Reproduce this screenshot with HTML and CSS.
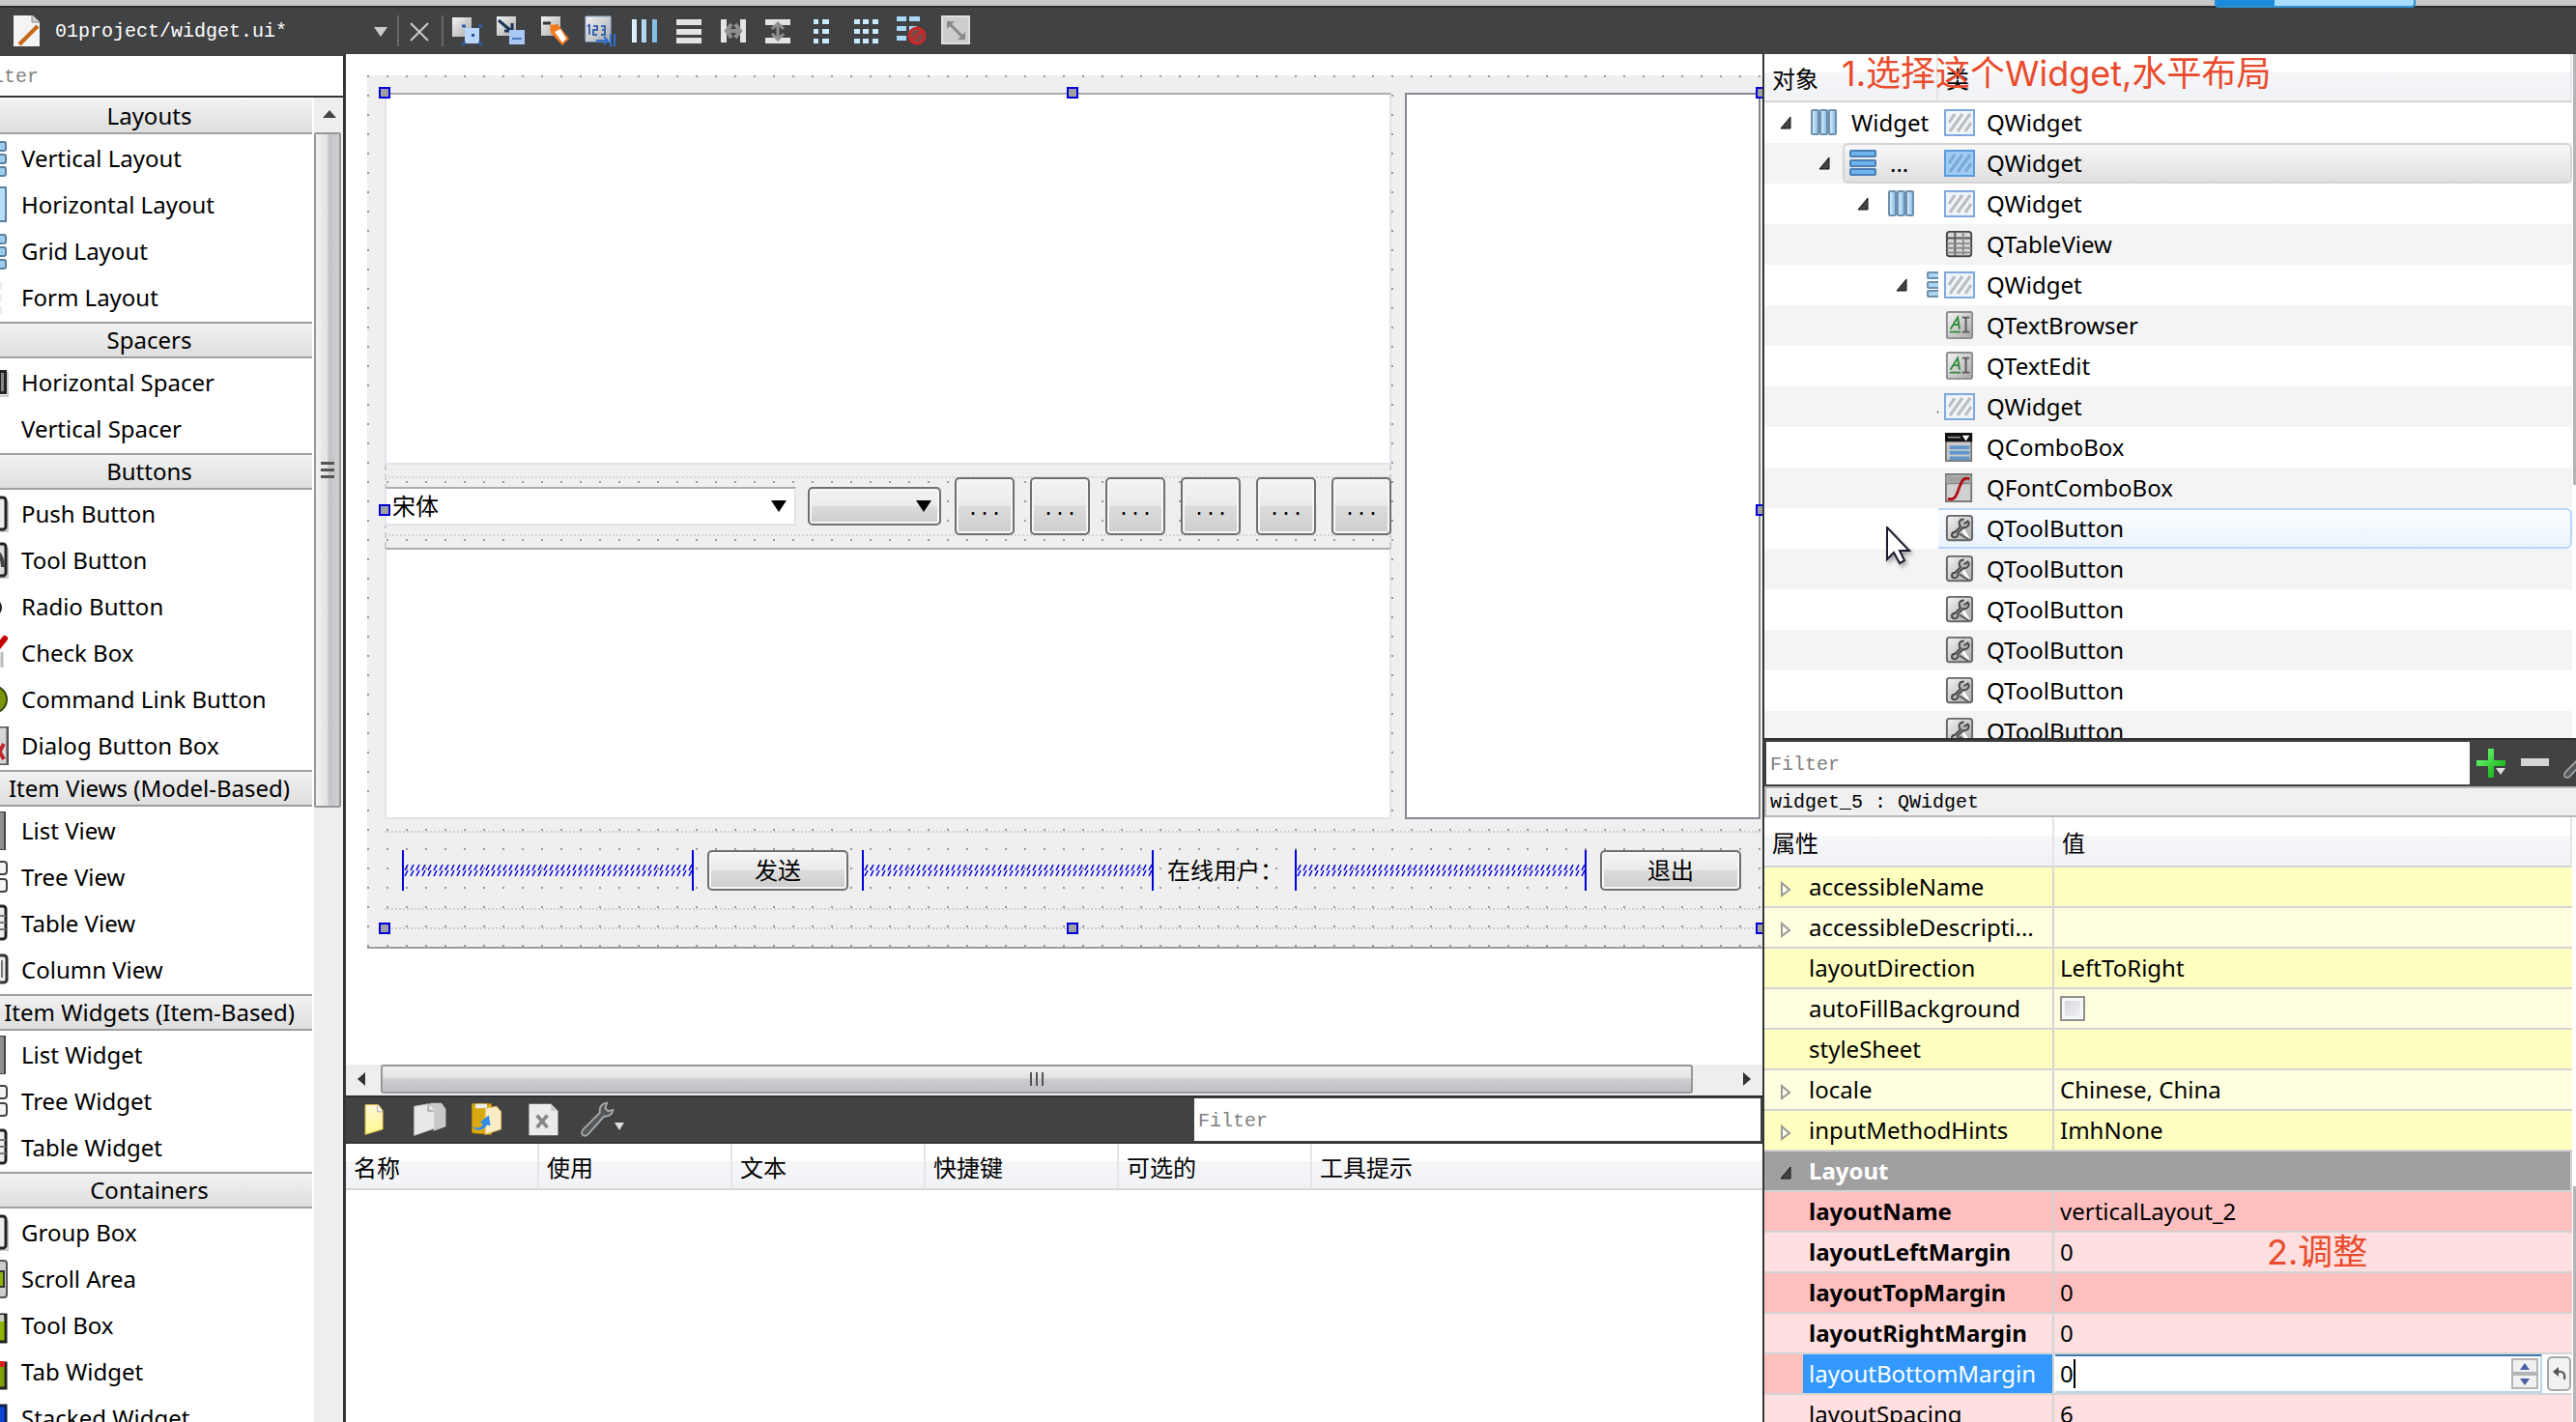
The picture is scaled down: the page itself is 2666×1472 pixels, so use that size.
FILE: index.html
```html
<!DOCTYPE html>
<html lang="zh-CN">
<head>
<meta charset="utf-8">
<title>01project/widget.ui* - Designer</title>
<link rel="stylesheet" href="styles.css">
</head>
<body>
<svg class="defs" aria-hidden="true">
  <defs>
    <linearGradient id="gBlue" x1="0" x2="1" y1="0" y2="0"><stop offset="0" stop-color="#e4f5ff"/><stop offset="1" stop-color="#7db8e2"/></linearGradient>
    <linearGradient id="gSteel" x1="0" x2="1" y1="0" y2="1"><stop offset="0" stop-color="#f4f4f4"/><stop offset="1" stop-color="#a8a8a8"/></linearGradient>
    <linearGradient id="gPage" x1="0" x2="0" y1="0" y2="1"><stop offset="0" stop-color="#fff6d8"/><stop offset="1" stop-color="#fff98c"/></linearGradient>
    <linearGradient id="gGreen" x1="0" x2="1" y1="0" y2="1"><stop offset="0" stop-color="#7dff7d"/><stop offset="1" stop-color="#00a800"/></linearGradient>
    <pattern id="hatch" width="6" height="12" patternUnits="userSpaceOnUse"><path d="M1 6 4 0M1 12 4 6" stroke="#0000dc" stroke-width="1.5"/></pattern>
    <symbol id="i-widget" viewBox="0 0 32 28"><rect x="1" y="1" width="30" height="26" fill="#eef4fb" stroke="#7fa9dc" stroke-width="2"/><path d="M5 14 11 5M6 23 19 5M14 23 27 5M22 23 28 14" stroke="#bcbcbc" stroke-width="3"/></symbol>
    <symbol id="i-widget-on" viewBox="0 0 32 28"><rect x="1" y="1" width="30" height="26" fill="#9fcaf3" stroke="#5b9be0" stroke-width="2"/><path d="M5 14 11 5M6 23 19 5M14 23 27 5M22 23 28 14" stroke="#7ba9d6" stroke-width="3"/></symbol>
    <symbol id="i-hbox" viewBox="0 0 28 28"><g fill="url(#gBlue)" stroke="#6f8fae" stroke-width="2"><rect x="1" y="1" width="7" height="25" rx="1"/><rect x="10" y="1" width="7" height="25" rx="1"/><rect x="19" y="1" width="7" height="25" rx="1"/></g></symbol>
    <symbol id="i-vbox" viewBox="0 0 28 28"><g fill="#6db4f0" stroke="#4a7fb4" stroke-width="2"><rect x="1" y="1" width="26" height="6" rx="1"/><rect x="1" y="11" width="26" height="6" rx="1"/><rect x="1" y="20" width="26" height="6" rx="1"/></g></symbol>
    <symbol id="i-form" viewBox="0 0 28 28"><g fill="#a9d4f2" stroke="#6f8fae" stroke-width="2"><rect x="1" y="1" width="26" height="6" rx="1"/><rect x="1" y="11" width="26" height="6" rx="1"/><rect x="1" y="20" width="26" height="6" rx="1"/></g></symbol>
    <symbol id="i-table" viewBox="0 0 32 32"><rect x="2" y="2" width="27" height="27" rx="3" fill="#d8d8d8" stroke="#444" stroke-width="2"/><path d="M2 9h27M11 2v27" stroke="#555" stroke-width="2"/><path d="M2 15h27M2 20h27M2 25h27M20 2v27" stroke="#8a8a8a" stroke-width="2"/></symbol>
    <symbol id="i-text" viewBox="0 0 32 32"><rect x="2" y="1" width="28" height="29" rx="2" fill="url(#gSteel)" stroke="#8d8d8d" stroke-width="2"/><path d="M6 20 14 7 16 20M9 15h6M5 23h12" stroke="#2f8a3c" stroke-width="2" fill="none"/><path d="M19 7h3l1 1 1-1h3M23 8v14M19 23h3l1-1 1 1h3" stroke="#555" stroke-width="2" fill="none"/></symbol>
    <symbol id="i-combo" viewBox="0 0 32 32"><rect x="1" y="1" width="28" height="30" fill="#c9c9c9" stroke="#777" stroke-width="2"/><path d="M0 0h30v10H0z" fill="#111"/><path d="M3 5h14" stroke="#888" stroke-width="2"/><path d="M19 3h8l-4 6z" fill="#fff"/><path d="M5 16h22M5 22h22M5 28h22" stroke="#5f97cc" stroke-width="4"/></symbol>
    <symbol id="i-font" viewBox="0 0 32 32"><rect x="1" y="1" width="28" height="30" fill="#d0d0d0" stroke="#777" stroke-width="2"/><path d="M1 4h28M1 11h28" stroke="#888" stroke-width="2"/><path d="M1 3h28v7H1z" fill="#a2a2a2"/><path d="M3 28c9 3 10-6 13-13S20 4 27 6" stroke="#b00d12" stroke-width="3" fill="none"/></symbol>
    <symbol id="i-tool" viewBox="0 0 32 32"><rect x="2" y="2" width="28" height="27" rx="3" fill="url(#gSteel)" stroke="#666" stroke-width="2"/><path d="M21 6c-5-1-7 4-4 8l-6 6c-4 0-5 5-1 6 4 0 5-3 4-5l6-6c5 1 8-4 5-7l-4 3" fill="#b5b5b5" stroke="#444" stroke-width="2"/><path d="M20 18l6 9" stroke="#fff" stroke-width="3"/><path d="M16 22l10 6" stroke="#555" stroke-width="2"/></symbol>
    <symbol id="i-open" viewBox="0 0 20 20"><path d="M15 4v12H5z" fill="#444" stroke="#111"/></symbol>
    <symbol id="i-closed" viewBox="0 0 20 20"><path d="M6 3v13l8-6z" fill="#fffff0" stroke="#999" stroke-width="2"/></symbol>
    <symbol id="i-wrench" viewBox="0 0 44 44"><path d="M3 39c-2-3 0-5 2-7L23 14c-1-6 2-10 8-11l-2 6 3 3 6-1c-1 5-5 8-10 7L10 38c-2 3-5 3-7 1z" fill="#55585a" stroke="#a9a9a9" stroke-width="2"/></symbol>

    <symbol id="l-v" viewBox="0 0 32 38"><g fill="#9fcdf0" stroke="#5c7fa3" stroke-width="2"><rect x="8" y="2" width="21" height="9" rx="2"/><rect x="8" y="15" width="21" height="9" rx="2"/><rect x="8" y="28" width="21" height="9" rx="2"/></g></symbol>
    <symbol id="l-h" viewBox="0 0 32 38"><g fill="#b4defa" stroke="#5c7fa3" stroke-width="2"><rect x="8" y="1" width="8" height="35"/><rect x="20" y="1" width="9" height="35"/></g></symbol>
    <symbol id="l-f" viewBox="0 0 32 38"><path d="M24 3v8M24 15v8M24 28v8" stroke="#eee" stroke-width="2"/></symbol>
    <symbol id="l-sp" viewBox="0 0 32 38"><path d="M18 6h12v25H18z" fill="#222"/><path d="M24 9h3v19h-3z" fill="#888"/><path d="M31 8v25H20" stroke="#ccc" stroke-width="2" fill="none"/></symbol>
    <symbol id="l-box" viewBox="0 0 32 38"><path d="M31 6v31H10" stroke="#c8c8c8" stroke-width="2" fill="none"/><rect x="4" y="2" width="25" height="33" rx="3" fill="#ececec" stroke="#222" stroke-width="3"/></symbol>
    <symbol id="l-tool" viewBox="0 0 32 38"><path d="M31 6v31H10" stroke="#c8c8c8" stroke-width="2" fill="none"/><rect x="4" y="2" width="25" height="33" rx="3" fill="#ddd" stroke="#222" stroke-width="3"/><path d="M22 12c2 4 4 6 4 14" stroke="#444" stroke-width="4" fill="none"/></symbol>
    <symbol id="l-radio" viewBox="0 0 32 38"><circle cx="15" cy="20" r="10" fill="#222"/></symbol>
    <symbol id="l-check" viewBox="0 0 32 38"><path d="M15 20 28 4" stroke="#c40000" stroke-width="6" stroke-linecap="round"/><path d="M25 18v16" stroke="#bbb" stroke-width="3"/></symbol>
    <symbol id="l-cmd" viewBox="0 0 32 38"><circle cx="16" cy="19" r="14" fill="#79960a" stroke="#33430b" stroke-width="2"/></symbol>
    <symbol id="l-dlg" viewBox="0 0 32 40"><path d="M2 0h29v40H2z" fill="#d7d7d7" stroke="#555" stroke-width="3"/><path d="M18 18l9 16M27 18l-9 16" stroke="#c0262b" stroke-width="4"/></symbol>
    <symbol id="l-list" viewBox="0 0 32 40"><path d="M2 0h26v40H2z" fill="#8c8f8c" stroke="#444" stroke-width="2"/></symbol>
    <symbol id="l-tree" viewBox="0 0 32 38"><g fill="#f4f4f4" stroke="#444" stroke-width="2"><rect x="14" y="3" width="16" height="13" rx="3"/><rect x="14" y="21" width="16" height="13" rx="3"/></g></symbol>
    <symbol id="l-tbl" viewBox="0 0 32 38"><rect x="4" y="1" width="25" height="34" rx="3" fill="#eee" stroke="#222" stroke-width="3"/><path d="M20 11h9M20 18h9M20 25h9" stroke="#777" stroke-width="2"/></symbol>
    <symbol id="l-col" viewBox="0 0 32 38"><rect x="4" y="4" width="26" height="28" rx="3" fill="#eee" stroke="#333" stroke-width="3"/><path d="M25 9v18" stroke="#777" stroke-width="2"/></symbol>
    <symbol id="l-scr" viewBox="0 0 32 40"><rect x="4" y="1" width="26" height="38" rx="3" fill="#ccc" stroke="#555" stroke-width="2"/><path d="M8 12h19v16H8z" fill="#8fb400" stroke="#333" stroke-width="2"/></symbol>
    <symbol id="l-tbox" viewBox="0 0 32 38"><path d="M4 8h25v28H4z" fill="#8fb400" stroke="#222" stroke-width="3"/><path d="M4 8h23v7H4z" fill="#ccc"/></symbol>
    <symbol id="l-tab" viewBox="0 0 32 38"><path d="M4 10h25v26H4z" fill="#7f9f08" stroke="#222" stroke-width="3"/><path d="M14 8h14v6H14z" fill="#d8201c"/></symbol>
    <symbol id="l-stk" viewBox="0 0 32 38"><path d="M4 6h25v28H4z" fill="#0b48d8" stroke="#10204a" stroke-width="3"/></symbol>
  </defs>
</svg>

<div class="app">
  <div class="desk"><span class="desk-tab"></span></div>
  <header class="topbar">
    <svg class="doc" viewBox="0 0 28 32"><path d="M0 0h20l7 7v25H0z" fill="#f4f4f4"/><path d="M19 0v7h8" fill="#ccc" stroke="#888"/><path d="M6 30 25 11" stroke="#c26a17" stroke-width="4"/></svg>
    <button class="doc-name" type="button">01project/widget.ui*<svg width="14" height="10" viewBox="0 0 14 10"><path d="M0 0h14L7 10z" fill="#ccc"/></svg></button>
    <i class="sep"></i>
    <button class="tb close" type="button" aria-label="Close"><svg viewBox="0 0 32 32"><path d="M7 8 25 26M25 8 7 26" stroke="#ccc" stroke-width="2"/></svg></button>
    <i class="sep"></i>
    <nav class="tools">
      <button class="tb" type="button" aria-label="Edit widgets"><svg viewBox="0 0 32 32"><path d="M1 2h20v20H1z" fill="url(#gSteel)"/><path d="M14 13h15v16H14z" fill="#b9d6ff"/><path d="M21 19h3v3h-3z" fill="#264f93"/><path d="M11 11h4M11 29h4M28 11h4M28 29h4" stroke="#2f5ea8" stroke-width="3"/></svg></button>
      <button class="tb" type="button" aria-label="Edit signals"><svg viewBox="0 0 32 32"><path d="M1 1h20v20H1z" fill="url(#gSteel)"/><path d="M3 5 16 16M9 16h8V8" stroke="#1d3557" stroke-width="3" fill="none"/><path d="M14 15h16v15H14z" fill="#a9c8f6"/><path d="M17 24h10" stroke="#4a7bc4" stroke-width="2"/></svg></button>
      <button class="tb" type="button" aria-label="Edit buddies"><svg viewBox="0 0 32 32"><path d="M1 1h20v20H1z" fill="url(#gSteel)"/><path d="M3 8h8" stroke="#333" stroke-width="3"/><path d="m10 10 8-1 12 15-7 7L11 18z" fill="#f47a20"/><path d="m15 17 6-3 6 10-4 4z" fill="#fff"/></svg></button>
      <button class="tb" type="button" aria-label="Edit tab order"><svg viewBox="0 0 32 32"><path d="M1 1h26v26H1z" fill="url(#gSteel)" stroke="#9db8de"/><path d="M3 11l2-1v10M9 11h4v4H9v5h4M17 11h4v9h-4M18 15h3" stroke="#3a67b0" stroke-width="2" fill="none"/><path d="M12 26h12M20 22l4 4-4 4M27 19v13M31 19v13" stroke="#2f6fd0" stroke-width="2" fill="none"/></svg></button>
      <button class="tb" type="button" aria-label="Lay out horizontally"><svg viewBox="0 0 32 32"><g fill="url(#gBlue)"><path d="M3 4h5v24H3zM13 4h5v24h-5zM24 4h5v24h-5z"/></g></svg></button>
      <button class="tb" type="button" aria-label="Lay out vertically"><svg viewBox="0 0 32 32"><path d="M3 4h26v6H3zM3 14h26v6H3zM3 23h26v6H3z" fill="#e4e4e4"/></svg></button>
      <button class="tb" type="button" aria-label="Horizontal splitter"><svg viewBox="0 0 32 32"><path d="M3 4h6v24H3zM23 4h6v24h-6z" fill="#e4e4e4"/><path d="M8 16h16M14 9l-5 7 5 7M18 9l5 7-5 7" stroke="#909090" stroke-width="4" fill="none"/></svg></button>
      <button class="tb" type="button" aria-label="Vertical splitter"><svg viewBox="0 0 32 32"><path d="M3 4h26v6H3zM3 23h26v6H3z" fill="#e4e4e4"/><path d="M16 8v16M10 14l6-6 6 6M10 19l6 6 6-6" stroke="#909090" stroke-width="3" fill="none"/></svg></button>
      <button class="tb" type="button" aria-label="Form layout"><svg viewBox="0 0 32 32"><g fill="#c9eaff"><path d="M7 4h5v5H7zM16 4h7v5h-7zM7 14h5v5H7zM16 14h7v5h-7zM7 24h5v5H7zM16 24h7v5h-7z"/></g></svg></button>
      <button class="tb" type="button" aria-label="Grid layout"><svg viewBox="0 0 32 32"><g fill="#c9eaff"><path d="M3 4h6v5H3zM12 4h6v5h-6zM22 4h6v5h-6zM3 14h6v5H3zM12 14h6v5h-6zM22 14h6v5h-6zM3 24h6v5H3zM12 24h6v5h-6zM22 24h6v5h-6z"/></g></svg></button>
      <button class="tb" type="button" aria-label="Break layout"><svg viewBox="0 0 32 32"><path d="M1 1h10v5H1zM14 1h11v5H14zM1 11h10v5H1zM14 11h8v5h-8zM1 21h10v5H1z" fill="#a9d9f5"/><circle cx="22" cy="21" r="8" fill="#7a4a4a" stroke="#c82a2a" stroke-width="3"/><path d="M16 27 28 15" stroke="#c82a2a" stroke-width="3"/></svg></button>
      <button class="tb" type="button" aria-label="Adjust size"><svg viewBox="0 0 32 32"><path d="M2 1h28v28H2z" fill="#cdcdcd" stroke="#e0e0e0" stroke-width="2"/><path d="M8 7 25 24" stroke="#888" stroke-width="3"/><path d="M7 6h8l-8 8zM26 25h-8l8-8z" fill="#888"/></svg></button>
    </nav>
  </header>

  <main class="work">
    <aside class="side">
      <input class="filter side-filter" type="text" placeholder="Filter" aria-label="Filter widgets">
      <div class="side-body">
        <div class="box">
          <h2>Layouts</h2>
          <ul>
            <li><svg class="li"><use href="#l-v"/></svg>Vertical Layout</li>
            <li><svg class="li"><use href="#l-h"/></svg>Horizontal Layout</li>
            <li><svg class="li"><use href="#l-v"/></svg>Grid Layout</li>
            <li><svg class="li"><use href="#l-f"/></svg>Form Layout</li>
          </ul>
          <h2>Spacers</h2>
          <ul>
            <li><svg class="li"><use href="#l-sp"/></svg>Horizontal Spacer</li>
            <li><svg class="li"></svg>Vertical Spacer</li>
          </ul>
          <h2>Buttons</h2>
          <ul>
            <li><svg class="li"><use href="#l-box"/></svg>Push Button</li>
            <li><svg class="li"><use href="#l-tool"/></svg>Tool Button</li>
            <li><svg class="li"><use href="#l-radio"/></svg>Radio Button</li>
            <li><svg class="li"><use href="#l-check"/></svg>Check Box</li>
            <li><svg class="li"><use href="#l-cmd"/></svg>Command Link Button</li>
            <li><svg class="li"><use href="#l-dlg"/></svg>Dialog Button Box</li>
          </ul>
          <h2>Item Views (Model-Based)</h2>
          <ul>
            <li><svg class="li"><use href="#l-list"/></svg>List View</li>
            <li><svg class="li"><use href="#l-tree"/></svg>Tree View</li>
            <li><svg class="li"><use href="#l-tbl"/></svg>Table View</li>
            <li><svg class="li"><use href="#l-col"/></svg>Column View</li>
          </ul>
          <h2>Item Widgets (Item-Based)</h2>
          <ul>
            <li><svg class="li"><use href="#l-list"/></svg>List Widget</li>
            <li><svg class="li"><use href="#l-tree"/></svg>Tree Widget</li>
            <li><svg class="li"><use href="#l-tbl"/></svg>Table Widget</li>
          </ul>
          <h2>Containers</h2>
          <ul>
            <li><svg class="li"><use href="#l-box"/></svg>Group Box</li>
            <li><svg class="li"><use href="#l-scr"/></svg>Scroll Area</li>
            <li><svg class="li"><use href="#l-tbox"/></svg>Tool Box</li>
            <li><svg class="li"><use href="#l-tab"/></svg>Tab Widget</li>
            <li><svg class="li"><use href="#l-stk"/></svg>Stacked Widget</li>
          </ul>
        </div>
        <div class="vbar">
          <svg class="vbar-up" viewBox="0 0 30 36"><path d="M9 21h14l-7-8z" fill="#444"/></svg>
          <div class="vthumb"><i></i><i></i><i></i></div>
        </div>
      </div>
    </aside>

    <section class="center">
      <div class="canvas">
        <div class="form">
          <div class="selection">
            <div class="upper">
              <div class="left">
                <div class="pane browser"></div>
                <div class="fontbar">
                  <div class="fontrow">
                    <div class="pick family"><select aria-label="字体"><option>宋体</option></select><svg width="16" height="12" viewBox="0 0 16 12"><path d="M0 0h16L8 12z"/></svg></div>
                    <div class="pick size"><select aria-label="字号"><option></option></select><svg width="16" height="12" viewBox="0 0 16 12"><path d="M0 0h16L8 12z"/></svg></div>
                    <button class="btn dots" type="button">...</button>
                    <button class="btn dots" type="button">...</button>
                    <button class="btn dots" type="button">...</button>
                    <button class="btn dots" type="button">...</button>
                    <button class="btn dots" type="button">...</button>
                    <button class="btn dots" type="button">...</button>
                  </div>
                </div>
                <div class="pane edit"></div>
              </div>
              <div class="table-pane"></div>
            </div>
            <div class="lower">
              <div class="spring"><svg><rect width="100%" height="12" fill="url(#hatch)"/></svg></div>
              <button class="btn push after" type="button">发送</button>
              <div class="spring"><svg><rect width="100%" height="12" fill="url(#hatch)"/></svg></div>
              <span class="online">在线用户：</span>
              <div class="spring after"><svg><rect width="100%" height="12" fill="url(#hatch)"/></svg></div>
              <button class="btn push" type="button">退出</button>
            </div>
            <i class="h tl"></i><i class="h tc"></i><i class="h tr"></i>
            <i class="h ml"></i><i class="h mr"></i>
            <i class="h bl"></i><i class="h bc"></i><i class="h br"></i>
          </div>
        </div>
      </div>
      <div class="hbar">
        <svg width="36" height="30" viewBox="0 0 36 30"><path d="M20 8v14l-8-7z" fill="#333"/></svg>
        <div class="hthumb"><i></i><i></i><i></i></div>
        <svg class="hbar-end" viewBox="0 0 70 30"><path d="M51 8v14l8-7z" fill="#333"/></svg>
      </div>
      <div class="actions">
        <div class="actbar">
          <button class="ab" type="button" aria-label="New"><svg viewBox="0 0 44 44"><path d="M11 5 26 5 31 12V33L11 39z" fill="url(#gPage)" stroke="#d8b23c"/><path d="M25 5v8h6" fill="#fff" stroke="#999"/></svg></button>
          <button class="ab" type="button" aria-label="Copy"><svg viewBox="0 0 44 44"><path d="M21 3h13l5 7v20l-14 5z" fill="#c9c9c9"/><path d="M3 7 20 4l6 7v21L3 40z" fill="#e8e8e8" stroke="#ccc"/><path d="M19 5v7h6" fill="none" stroke="#aaa" stroke-width="2"/></svg></button>
          <button class="ab" type="button" aria-label="Paste"><svg viewBox="0 0 44 44"><path d="M5 4h22v35L5 37z" fill="#d9aa10" stroke="#b98500"/><path d="M9 4h13v5H9z" fill="#eee"/><path d="M20 9 33 7l5 6v20l-18 6z" fill="#faecc4" stroke="#e0b760"/><path d="M6 30c8 3 11 0 11-4l-3-1 10-8 2 12-4-1c-4 7-13 8-16 2z" fill="#2f8bea"/></svg></button>
          <button class="ab wide" type="button" aria-label="Delete"><svg viewBox="0 0 44 44"><path d="M6 4h25l8 8v28H6z" fill="#ececec"/><path d="M31 4v8h8" fill="#ccc"/><path d="m15 17 12 14M27 17 15 31" stroke="#888" stroke-width="4"/></svg></button>
          <button class="ab" type="button" aria-label="Configure"><svg viewBox="0 0 44 44"><use href="#i-wrench"/></svg></button>
          <svg class="drop" width="10" height="8" viewBox="0 0 10 8"><path d="M0 0h10L5 8z" fill="#ddd"/></svg>
          <input class="filter act-filter" type="text" placeholder="Filter" aria-label="Filter actions">
        </div>
        <table class="acts">
          <thead><tr><th>名称</th><th>使用</th><th>文本</th><th>快捷键</th><th>可选的</th><th>工具提示</th></tr></thead>
        </table>
      </div>
    </section>

    <aside class="right">
      <section class="objects">
        <table class="tree">
          <thead><tr><th class="c1">对象</th><th>类</th></tr></thead>
          <tbody>
            <tr><td><div class="node d0"><svg class="car"><use href="#i-open"/></svg><span class="lab"><svg class="ic"><use href="#i-hbox"/></svg>Widget</span></div></td><td><div class="cls"><svg><use href="#i-widget"/></svg>QWidget</div></td></tr>
            <tr class="sel"><td><div class="node d1"><svg class="car"><use href="#i-open"/></svg><span class="lab"><svg class="ic"><use href="#i-vbox"/></svg>...</span></div></td><td><div class="cls"><svg><use href="#i-widget-on"/></svg>QWidget</div></td></tr>
            <tr><td><div class="node d2"><svg class="car"><use href="#i-open"/></svg><span class="lab"><svg class="ic"><use href="#i-hbox"/></svg></span></div></td><td><div class="cls"><svg><use href="#i-widget"/></svg>QWidget</div></td></tr>
            <tr><td></td><td><div class="cls"><svg><use href="#i-table"/></svg>QTableView</div></td></tr>
            <tr><td><div class="node d3"><svg class="car"><use href="#i-open"/></svg><span class="lab"><svg class="ic"><use href="#i-form"/></svg></span></div></td><td><div class="cls"><svg><use href="#i-widget"/></svg>QWidget</div></td></tr>
            <tr><td></td><td><div class="cls"><svg><use href="#i-text"/></svg>QTextBrowser</div></td></tr>
            <tr><td></td><td><div class="cls"><svg><use href="#i-text"/></svg>QTextEdit</div></td></tr>
            <tr><td><div class="node d4"><svg class="car"><use href="#i-open"/></svg></div></td><td><div class="cls"><svg><use href="#i-widget"/></svg>QWidget</div></td></tr>
            <tr><td></td><td><div class="cls"><svg><use href="#i-combo"/></svg>QComboBox</div></td></tr>
            <tr><td></td><td><div class="cls"><svg><use href="#i-font"/></svg>QFontComboBox</div></td></tr>
            <tr class="hot"><td></td><td><div class="cls"><svg><use href="#i-tool"/></svg>QToolButton</div></td></tr>
            <tr><td></td><td><div class="cls"><svg><use href="#i-tool"/></svg>QToolButton</div></td></tr>
            <tr><td></td><td><div class="cls"><svg><use href="#i-tool"/></svg>QToolButton</div></td></tr>
            <tr><td></td><td><div class="cls"><svg><use href="#i-tool"/></svg>QToolButton</div></td></tr>
            <tr><td></td><td><div class="cls"><svg><use href="#i-tool"/></svg>QToolButton</div></td></tr>
            <tr><td></td><td><div class="cls"><svg><use href="#i-tool"/></svg>QToolButton</div></td></tr>
          </tbody>
        </table>
        <i class="edge"></i>
        <p class="note n1">1.选择这个Widget,水平布局</p>
        <svg class="cursor" viewBox="0 0 28 42"><path d="M1 1v33l7-7 6 11 5-3-5-10h10z" fill="#fff" stroke="#1a1a2e" stroke-width="2"/></svg>
      </section>
      <section class="props">
        <div class="propbar">
          <input class="filter prop-filter" type="text" placeholder="Filter" aria-label="Filter properties">
          <button class="pb" type="button" aria-label="Add"><svg viewBox="0 0 36 36"><path d="M15 3h6v12h12v6H21v12h-6V21H3v-6h12z" fill="url(#gGreen)"/><path d="M23 23h10l-5 7z" fill="#ddd"/></svg></button>
          <button class="pb" type="button" aria-label="Remove"><svg viewBox="0 0 36 36"><path d="M3 13h29v8H3z" fill="#d6d6d6"/></svg></button>
          <button class="pb" type="button" aria-label="Configure"><svg viewBox="0 0 44 44"><use href="#i-wrench"/></svg></button>
        </div>
        <p class="objname">widget_5 : QWidget</p>
        <table class="plist">
          <thead><tr><th class="c1">属性</th><th>值</th></tr></thead>
          <tbody>
            <tr class="y1"><td><svg class="car"><use href="#i-closed"/></svg>accessibleName</td><td></td></tr>
            <tr class="y2"><td><svg class="car"><use href="#i-closed"/></svg>accessibleDescripti...</td><td></td></tr>
            <tr class="y1"><td><svg class="car"></svg>layoutDirection</td><td>LeftToRight</td></tr>
            <tr class="y2"><td><svg class="car"></svg><label for="afb">autoFillBackground</label></td><td><input class="tick" id="afb" type="checkbox"></td></tr>
            <tr class="y1"><td><svg class="car"></svg>styleSheet</td><td></td></tr>
            <tr class="y2"><td><svg class="car"><use href="#i-closed"/></svg>locale</td><td>Chinese, China</td></tr>
            <tr class="y1"><td><svg class="car"><use href="#i-closed"/></svg>inputMethodHints</td><td>ImhNone</td></tr>
            <tr class="group"><td colspan="2"><svg class="car"><use href="#i-open"/></svg>Layout</td></tr>
            <tr class="p1 b"><td><svg class="car"></svg>layoutName</td><td>verticalLayout_2</td></tr>
            <tr class="p2 b"><td><svg class="car"></svg>layoutLeftMargin</td><td>0</td></tr>
            <tr class="p1 b"><td><svg class="car"></svg>layoutTopMargin</td><td>0</td></tr>
            <tr class="p2 b"><td><svg class="car"></svg>layoutRightMargin</td><td>0</td></tr>
            <tr class="p1 cur"><td><svg class="car"></svg><label for="lbm">layoutBottomMargin</label></td><td class="editcell"><div class="editor"><div class="spin"><input id="lbm" type="text" value="0" size="1"><i class="caret"></i><span class="steps"><button type="button" aria-label="Up"><svg width="10" height="7" viewBox="0 0 10 7"><path d="M0 7h10L5 0z" fill="#4b5fa8"/></svg></button><button type="button" aria-label="Down"><svg width="10" height="7" viewBox="0 0 10 7"><path d="M0 0h10L5 7z" fill="#4b5fa8"/></svg></button></span></div><button class="reset" type="button" aria-label="Reset"><svg width="16" height="16" viewBox="0 0 16 16"><path d="M7 1v10L1 6z" fill="#555"/><path d="M6 6c6-1 8 2 7 8" fill="none" stroke="#555" stroke-width="2"/></svg></button></div></td></tr>
            <tr class="p2"><td><svg class="car"></svg>layoutSpacing</td><td>6</td></tr>
          </tbody>
        </table>
        <i class="edge low"></i>
        <p class="note n2">2.调整</p>
      </section>
    </aside>
  </main>
</div>
</body>
</html>
```
FILE: styles.css
```css
* { box-sizing: border-box; }
body {
  margin: 0;
  overflow: hidden;
  background: #fff;
  color: #000;
  font: 24px/30px "Noto Sans", "Noto Sans CJK SC", sans-serif;
}
p, h2, ul { margin: 0; padding: 0; }
i { display: block; }
svg { display: block; flex: none; }
button, input, select { font: inherit; color: inherit; margin: 0; }
.defs { position: absolute; width: 0; height: 0; }
.app { display: flex; flex-direction: column; height: 100vh; }

/* desktop strip and main toolbar */
.desk { position: relative; flex: none; height: 6px; background: #c8c8c9; }
.desk-tab {
  position: absolute; z-index: 1; right: 166px; top: 0; width: 208px; height: 8px;
  background: linear-gradient(90deg, #1a8bdc 60px, #a5dcff 60px);
  border: 2px solid #2f8fcf; border-top: 0; border-radius: 0 0 4px 4px;
}
.topbar {
  flex: none; display: flex; align-items: center; height: 50px; padding: 0 0 0 14px;
  background: #414244; border-top: 2px solid #2d2e30;
}
.doc { width: 28px; height: 32px; }
.doc-name {
  display: flex; align-items: center; justify-content: space-between;
  width: 344px; padding: 2px 0 0; margin: 0 10px 0 15px; border: 0; background: none;
  color: #fff; font: 20px/24px "Liberation Mono", monospace;
}
.sep { width: 2px; height: 32px; background: #67686a; }
.tb { width: 32px; height: 32px; padding: 0; border: 0; background: none; }
.close { margin: 0 7px 0 5px; }
.tools { display: flex; gap: 14px; margin-left: 8px; }

.work {
  flex: 1; min-height: 0; display: grid;
  grid-template-columns: 358px minmax(0, 1fr) 842px;
}
.filter {
  border: 0; outline: 0; padding: 2px 4px 0; background: #fff; border-radius: 0;
  font: 20px/24px "Liberation Mono", monospace;
}
.filter::placeholder { color: #808080; opacity: 1; }

/* widget box */
.side {
  display: flex; flex-direction: column; min-height: 0; margin-left: -36px;
  border-right: 3px solid #343537; background: #fff;
}
.side-filter { flex: none; height: 45px; border-top: 2px solid #414244; border-bottom: 2px solid #343537; }
.side-body { flex: 1; min-height: 0; display: flex; }
.box { flex: 1; margin-left: 22px; overflow: hidden; }
.box h2 {
  height: 38px; margin-bottom: 2px; text-align: center; font-size: 24px; font-weight: 400; line-height: 34px; white-space: nowrap;
  border: 2px solid #a0a0a0; border-width: 2px 0;
  background: linear-gradient(#f2f2f2, #dedede);
}
.box h2:first-child { border-top-color: #fff; }
.box ul { list-style: none; }
.box li { display: flex; align-items: center; gap: 13px; height: 48px; padding: 0 0 2px 14px; margin-left: -23px; white-space: nowrap; }
.li { width: 32px; height: 40px; }
.vbar { flex: none; width: 32px; padding-right: 2px; background: #eee; border-left: 2px solid #fff; display: flex; flex-direction: column; }
.vbar-up { width: 30px; height: 36px; }
.vthumb {
  height: 51%; display: flex; flex-direction: column; align-items: center; justify-content: center; gap: 4px;
  border: 2px solid #97979a; border-radius: 2px;
  background: linear-gradient(90deg, #f2f2f2, #e2e2e4 50%, #c4c4c8 55%, #d0d0d2);
}
.vthumb i { width: 14px; height: 3px; background: #555; }

/* form editor */
.center { display: flex; flex-direction: column; min-width: 0; min-height: 0; }
.canvas { flex: 1; min-height: 0; padding: 22px 0 0 22px; overflow: hidden; background: #fff; }
.form {
  padding: 18px 2px 18px 18px; border-bottom: 2px solid #9c9c9c;
  background: conic-gradient(from 270deg at 2px 2px, #999 90deg, transparent 0) 0 0 / 20px 20px, #efefef;
}
.selection { position: relative; border-bottom: 2px dotted #ccc; }
.upper { display: grid; grid-template-columns: minmax(0, 1fr) 368px; gap: 14px; }
.pane { background: #fff; border: 2px solid #e2e3ea; border-top-color: #abadb3; }
.browser { height: 385px; }
.edit { height: 281px; }
.table-pane { background: #fff; border: 2px solid #828790; }
.fontbar { height: 86px; padding: 12px 0; border: 2px dashed #ccc; border-width: 0 2px; }
.fontrow { display: flex; align-items: center; gap: 16px; height: 62px; margin: 0 -2px; border: 2px dotted #d4d4d4; border-width: 2px 0; }
.pick { position: relative; display: flex; align-items: center; height: 40px; }
.pick select { width: 100%; height: 40px; padding: 0 6px; appearance: none; border: 2px solid #e2e3ea; border-top-color: #abadb3; border-radius: 0; background: #fff; }
.pick svg { position: absolute; right: 10px; }
.family { flex: 1; margin-right: -4px; }
.size { width: 138px; margin-right: -2px; }
.size select, .btn {
  border: 2px solid #707070; border-radius: 5px;
  background: linear-gradient(#f3f3f3, #ebebeb 48%, #dcdcdc 50%, #cdcdcd);
  box-shadow: inset 0 0 0 2px #f6f6f6;
}
.btn { flex: none; padding: 0; }
.dots { width: 62px; height: 60px; padding-top: 8px; font: 20px/24px "Liberation Mono", monospace; }
.lower {
  display: flex; align-items: center; height: 82px; margin: 12px 0 18px; padding: 0 20px 0 18px; gap: 14px;
  border: 2px dotted #d0d0d0; border-width: 2px 0;
}
.spring { flex: 1; display: flex; align-items: center; height: 42px; border: 2px solid #0000dc; border-width: 0 2px; }
.spring svg { width: 100%; height: 12px; }
.push { width: 146px; height: 42px; }
.online { width: 118px; white-space: nowrap; }
.h { position: absolute; width: 12px; height: 12px; background: #a0a0a0; border: 2px solid #0000dc; }
.tl, .tc, .tr { top: -6px; }
.ml, .mr { top: calc(50% - 6px); }
.bl, .bc, .br { bottom: -7px; }
.tl, .ml, .bl { left: -6px; }
.tc, .bc { left: calc(50% - 6px); }
.tr, .mr, .br { right: -7px; }
.hbar { flex: none; display: flex; height: 32px; padding-bottom: 2px; background: #eee; }
.hthumb {
  flex: 1; display: flex; align-items: center; justify-content: center; gap: 4px;
  border: 2px solid #97979a; border-radius: 3px;
  background: linear-gradient(#f2f2f2, #e2e2e4 45%, #ceced2 50%, #bfbfc4);
}
.hthumb i { width: 2px; height: 14px; background: #555; }
.hbar-end { width: 72px; height: 30px; }

/* action editor */
.actions { flex: none; height: 338px; background: #fff; }
.actbar { display: flex; align-items: center; height: 50px; padding: 0 0 0 10px; background: #414244; border-top: 2px solid #2d2e30; border-bottom: 2px solid #343537; }
.ab { width: 40px; height: 40px; margin-right: 18px; padding: 0; border: 0; background: none; }
.drop { margin: 14px 0 0 -22px; }
.act-filter { width: 586px; height: 44px; margin: 0 2px 0 auto; }
table { border-collapse: separate; border-spacing: 0; table-layout: fixed; width: 100%; }
th {
  height: 48px; padding: 4px 8px 0; text-align: left; font-weight: 400; white-space: nowrap;
  border-bottom: 2px solid #d5d5d5; border-right: 2px solid #e4e5e7;
  background: linear-gradient(#fff 38%, #f5f6f8 40%, #f0f2f5);
}
.acts th { width: 200px; }
.acts th:last-child { width: auto; border-right: 0; }

/* object inspector */
.right { display: flex; flex-direction: column; min-height: 0; border-left: 2px solid #343537; }
.objects, .props { position: relative; flex: 1 1 0; min-height: 0; overflow: hidden; padding-right: 4px; background: #fff; }
.tree .c1 { width: 180px; }
.tree td { height: 42px; padding: 0; overflow: hidden; white-space: nowrap; }
.tree tbody { line-height: 40px; }
.tree tbody tr:nth-child(even) { background: #f4f4f4; }
.tree th { height: 50px; }
.node { display: flex; align-items: center; height: 42px; gap: 9px; padding-left: 12px; }
.car { width: 20px; height: 20px; }
.lab { flex: 1 0 auto; display: flex; align-items: center; gap: 14px; height: 42px; padding-left: 7px; }
.ic { width: 28px; height: 28px; }
.d1 { padding-left: 52px; }
.d2 { padding-left: 92px; }
.d3 { padding-left: 132px; }
.d4 { padding-left: 174px; }
.cls { display: flex; align-items: center; gap: 12px; height: 42px; padding-left: 6px; }
.cls svg { width: 32px; height: 30px; }
.sel .lab, .sel .cls { background: linear-gradient(#f7f7f7, #e0e0e0); border: 2px solid #d4d4d4; }
.sel .lab { border-right: 0; border-radius: 6px 0 0 6px; padding-left: 5px; }
.sel .cls { border-left: 0; border-radius: 0 6px 6px 0; }
.hot .cls { border: 2px solid #b8d6fb; border-left: 0; border-radius: 0 6px 6px 0; background: linear-gradient(#fbfdff, #ebf3fd); }
.edge { position: absolute; right: 0; top: 0; width: 3px; height: 446px; background: #b4b4b8; }
.low { top: 464px; height: 244px; }
.note { position: absolute; color: #e94b2c; font-size: 36px; line-height: 40px; white-space: nowrap; font-family: "Inter", "Noto Sans CJK SC", sans-serif; }
.n1 { left: 80px; top: 0; }
.n2 { left: 520px; top: 512px; }
.cursor { position: absolute; left: 126px; top: 489px; width: 28px; height: 42px; filter: drop-shadow(2px 3px 2px #0005); }

/* property editor */
.propbar { display: flex; align-items: center; height: 50px; margin-right: -4px; padding: 0 0 0 2px; overflow: hidden; background: #414244; border-top: 2px solid #2d2e30; }
.prop-filter { flex: 1; height: 44px; margin-right: 4px; }
.pb { width: 36px; height: 36px; margin-right: 10px; padding: 0; border: 0; background: none; }
.pb:last-child { margin-right: -22px; }
.objname { height: 32px; margin-right: -4px; padding-left: 4px; font: 20px/30px "Liberation Mono", monospace; background: #f0f0f0; border: 2px solid #b8b8b8; border-right: 0; }
.plist th { height: 52px; }
.plist .c1 { width: 300px; }
.plist td { height: 42px; padding: 0 6px; overflow: hidden; white-space: nowrap; line-height: 40px; border-bottom: 2px solid #d4d4d4; }
.plist td:first-child { padding-left: 12px; padding-right: 0; border-right: 2px solid #d4d4d4; }
.plist .car { display: inline-block; vertical-align: middle; margin-right: 14px; }
.y1 { background: #ffffbf; }
.y2 { background: #ffffdf; }
.p1 { background: #ffbfbf; }
.p2 { background: #ffdfdf; }
.group { background: #a0a0a0; color: #fff; font-weight: 700; }
.b td:first-child { font-weight: 700; }
.cur td:first-child { color: #fff; background: linear-gradient(90deg, #ffbfbf 40px, #3399ff 40px); }
.tick { display: block; appearance: none; width: 26px; height: 26px; border: 2px solid #8e8f8f; background: linear-gradient(135deg, #cfd2d8, #f8f8f8); box-shadow: inset 0 0 0 3px #f6f6f6; }
.plist .editcell { padding: 0 1px; background: #fff; }
.editor { display: flex; align-items: center; gap: 5px; height: 40px; }
.spin { flex: 1; display: flex; align-items: center; height: 40px; padding-left: 5px; border: 2px solid #bcd6ea; border-top-color: #3d7bad; border-left: 0; background: #fff; }
.spin input { width: 14px; padding: 0; border: 0; outline: 0; background: none; }
.caret { width: 2px; height: 30px; background: #000; }
.steps { display: flex; flex-direction: column; margin-left: auto; margin-right: 2px; }
.steps button { display: flex; align-items: center; justify-content: center; width: 28px; height: 16px; padding: 0; border: 2px solid #b5b5b5; background: #f0f0f0; }
.reset { display: flex; align-items: center; justify-content: center; width: 25px; height: 36px; padding: 0; border: 2px solid #a8a8a8; border-radius: 5px; background: #f2f2f2; }
```
